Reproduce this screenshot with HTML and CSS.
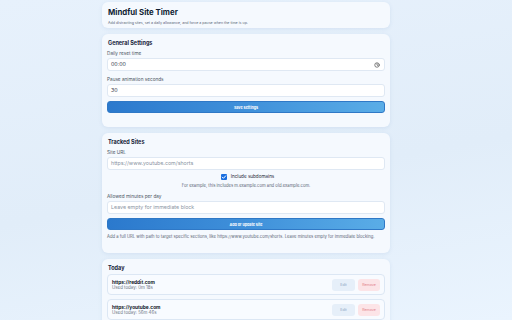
FILE: index.html
```html
<!DOCTYPE html>
<html lang="en">
<head>
    <meta charset="UTF-8">
    <meta name="viewport" content="width=device-width, initial-scale=1.0">
    <title>Mindful Site Timer</title>
    <link rel="stylesheet" href="styles.css">
</head>
<body>
    <main class="container">
        <!-- Header -->
        <section class="card header-card">
            <h1>Mindful Site Timer</h1>
            <p class="subtitle">Add distracting sites, set a daily allowance, and force a pause when the time is up.</p>
        </section>

        <!-- General settings -->
        <section class="card">
            <h2>General Settings</h2>
            <label class="field-label">Daily reset time</label>
            <div class="text-input time-input">
                <span>00:00</span>
                <svg width="6" height="6" viewBox="0 0 24 24" fill="none" stroke="#333" stroke-width="2.4" stroke-linecap="round">
                    <circle cx="12" cy="12" r="9"/>
                    <path d="M12 7v5l3 2"/>
                </svg>
            </div>
            <label class="field-label">Pause animation seconds</label>
            <div class="text-input">30</div>
            <button class="primary-button">Save settings</button>
            <div class="status"></div>
        </section>

        <!-- Tracked sites -->
        <section class="card">
            <h2>Tracked Sites</h2>
            <label class="field-label">Site URL</label>
            <div class="text-input placeholder">https://www.youtube.com/shorts</div>
            <div class="checkbox-row">
                <span class="checkbox">
                    <svg width="6" height="6" viewBox="0 0 12 12" fill="none" stroke="#fff" stroke-width="2" stroke-linecap="round" stroke-linejoin="round">
                        <path d="M2.5 6.2l2.4 2.4 4.6-5"/>
                    </svg>
                </span>
                <span>Include subdomains</span>
            </div>
            <p class="center-note">For example, this includes m.example.com and old.example.com.</p>
            <label class="field-label">Allowed minutes per day</label>
            <div class="text-input placeholder">Leave empty for immediate block</div>
            <button class="primary-button">Add or update site</button>
            <p class="hint">Add a full URL with path to target specific sections, like https://www.youtube.com/shorts. Leave minutes empty for immediate blocking.</p>
        </section>

        <!-- Today -->
        <section class="card">
            <h2>Today</h2>
            <div class="site-list">
                <div class="site-item">
                    <div class="site-info">
                        <div class="site-url">https://reddit.com</div>
                        <div class="site-used">Used today: 0m 18s</div>
                    </div>
                    <div class="site-actions">
                        <button class="edit-button">Edit</button>
                        <button class="remove-button">Remove</button>
                    </div>
                </div>
                <div class="site-item">
                    <div class="site-info">
                        <div class="site-url">https://youtube.com</div>
                        <div class="site-used">Used today: 56m 46s</div>
                    </div>
                    <div class="site-actions">
                        <button class="edit-button">Edit</button>
                        <button class="remove-button">Remove</button>
                    </div>
                </div>
            </div>
        </section>
    </main>
</body>
</html>
```

FILE: styles.css
```css
* {
    margin: 0;
    padding: 0;
    box-sizing: border-box;
    font-family: 'Inter', 'Noto Sans', sans-serif;
}

body {
    height: 100vh;
    overflow: hidden;
    background: linear-gradient(170deg, #e7f1fc 0%, #e1edf9 55%, #eaf4fe 100%);
    color: #1f2937;
}

.container {
    width: 288px;
    margin: 2px 0 0 102px;
    display: flex;
    flex-direction: column;
    gap: 6px;
}

/* Cards */
.card {
    background-color: #f5f9fe;
    border-radius: 6px;
    padding: 6px 5px 6px;
    box-shadow: 0 1px 4px rgba(40, 90, 150, 0.09);
}

.header-card {
    padding: 4px 6px 2px;
}

h1 {
    font-size: 7.8px;
    line-height: 13px;
    font-weight: 700;
    color: #0f1d33;
}

.subtitle {
    font-size: 3.6px;
    line-height: 6px;
    color: #5b6676;
    margin-top: 1px;
}

h2 {
    font-size: 5.5px;
    line-height: 6px;
    font-weight: 700;
    color: #16233a;
    margin: 0 1px 4px;
}

.field-label {
    display: block;
    font-size: 4.7px;
    line-height: 6px;
    color: #4b5563;
    margin: 0 0 2px;
}

.text-input {
    height: 13px;
    background-color: #fff;
    border: 1px solid #dfe8f3;
    border-radius: 3px;
    padding: 0 4px 0 3px;
    font-size: 5.3px;
    line-height: 11px;
    color: #374151;
    margin-bottom: 5px;
}

.text-input.placeholder {
    color: #8a94a3;
}

.time-input {
    display: flex;
    align-items: center;
    justify-content: space-between;
}

.primary-button {
    display: block;
    width: 100%;
    height: 12px;
    margin-top: -1px;
    border: 1px solid #2f78c6;
    border-radius: 3px;
    background: linear-gradient(90deg, #2b79cd 0%, #3f90da 50%, #5aade7 100%);
    color: #fff;
    font-size: 3.7px;
    font-weight: 700;
    cursor: pointer;
}

.status {
    height: 8px;
}

.checkbox-row {
    display: flex;
    align-items: center;
    justify-content: center;
    gap: 4px;
    font-size: 4.6px;
    line-height: 6px;
    color: #1f2937;
    margin: -1px 0 0 3px;
}

.checkbox {
    width: 6px;
    height: 6px;
    border-radius: 1px;
    background-color: #1a6fe0;
    display: flex;
    align-items: center;
    justify-content: center;
}

.center-note {
    text-align: center;
    font-size: 4.2px;
    line-height: 6px;
    color: #5b6676;
    margin: 3px 0 4px;
}

.hint {
    font-size: 4.2px;
    line-height: 6px;
    color: #5b6676;
    margin: 4px 0 7px;
}

/* Today list */
.site-list {
    display: flex;
    flex-direction: column;
    gap: 4px;
    margin-top: -1px;
}

.site-item {
    display: flex;
    align-items: center;
    justify-content: space-between;
    height: 21px;
    padding: 0 4px;
    border: 1px solid #dce7f4;
    border-radius: 4px;
    background-color: #f8fbff;
}

.site-url {
    font-size: 4.8px;
    line-height: 6px;
    font-weight: 700;
    color: #111827;
}

.site-used {
    font-size: 4.4px;
    line-height: 6px;
    color: #6b7280;
}

.site-actions {
    display: flex;
    gap: 3px;
}

.edit-button,
.remove-button {
    height: 12px;
    border: none;
    border-radius: 3px;
    font-size: 3.6px;
    cursor: pointer;
}

.edit-button {
    width: 23px;
    background-color: #e6eff9;
    color: #8aa3c2;
}

.remove-button {
    width: 22px;
    background-color: #fce4e7;
    color: #e27d88;
}
```
